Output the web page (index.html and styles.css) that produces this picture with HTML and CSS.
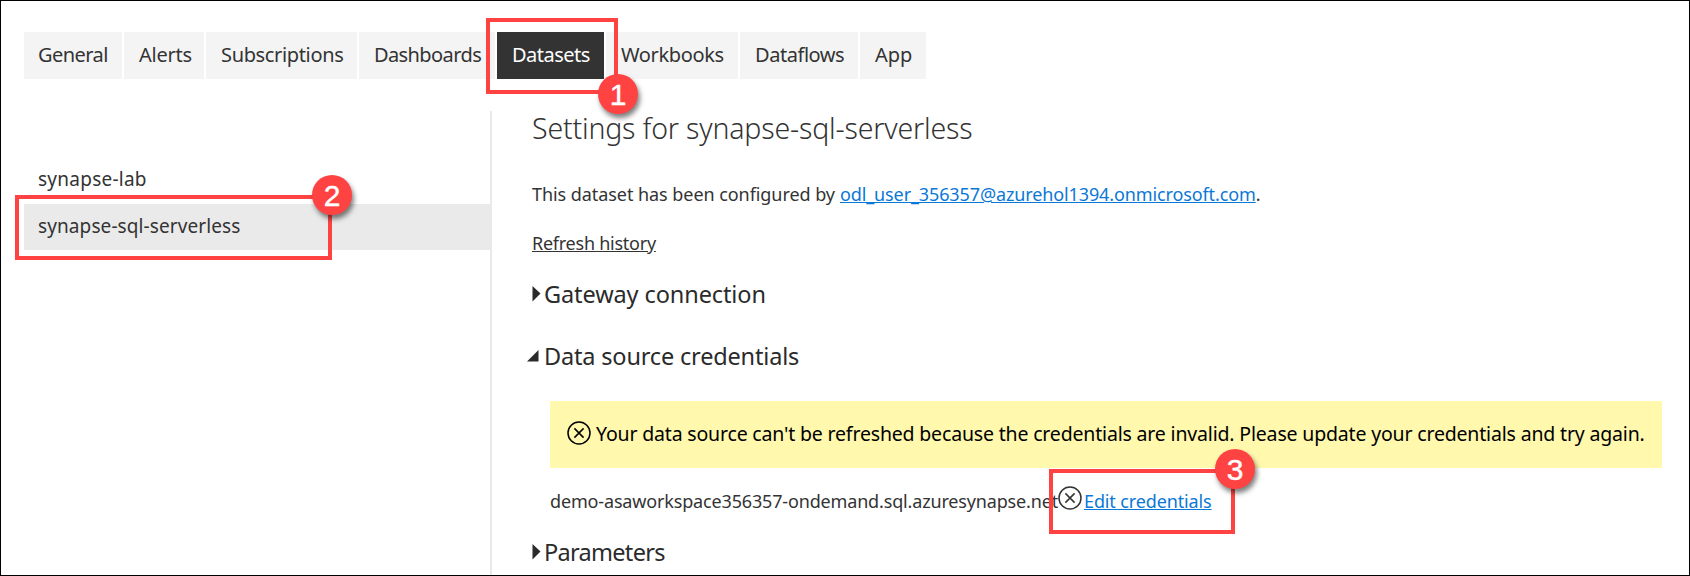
FILE: index.html
```html
<!DOCTYPE html>
<html lang="en">
<head>
<meta charset="utf-8">
<title>Settings</title>
<link rel="stylesheet" href="styles.css">
</head>
<body>
<div class="page">
  <nav class="tabs">
    <a class="tab t-general">General</a>
    <a class="tab t-alerts">Alerts</a>
    <a class="tab t-subscriptions">Subscriptions</a>
    <a class="tab t-dashboards">Dashboards</a>
    <a class="tab t-datasets active">Datasets</a>
    <a class="tab t-workbooks">Workbooks</a>
    <a class="tab t-dataflows">Dataflows</a>
    <a class="tab t-app">App</a>
  </nav>
  <div class="body">
    <aside class="sidebar">
      <div class="item"><span class="item-lab">synapse-lab</span></div>
      <div class="item selected"><span class="item-sql">synapse-sql-serverless</span></div>
    </aside>
    <main class="content">
      <h1 class="title"><span>Settings for synapse-sql-serverless</span></h1>
      <p class="configured"><span class="cfg">This dataset has been configured by</span><a class="link mail">odl_user_356357@azurehol1394.onmicrosoft.com</a><span>.</span></p>
      <p class="history"><a class="hist">Refresh history</a></p>
      <h2 class="section gateway"><svg class="caret" width="9" height="16" viewBox="0 0 9 16"><path d="M0.5 0L8.5 7.5L0.5 15.5Z"/></svg><span>Gateway connection</span></h2>
      <h2 class="section source"><svg class="caret open" width="12" height="12" viewBox="0 0 12 12"><path d="M11.5 0V11.5H0Z"/></svg><span>Data source credentials</span></h2>
      <div class="alert"><svg class="cross" width="24" height="24" viewBox="0 0 24 24"><circle cx="12" cy="12" r="11"/><path d="M7.4 7.4L16.6 16.6M16.6 7.4L7.4 16.6"/></svg><span class="message">Your data source can't be refreshed because the credentials are invalid. Please update your credentials and try again.</span></div>
      <div class="endpoint"><span class="host">demo-asaworkspace356357-ondemand.sql.azuresynapse.net</span><svg class="cross small" width="24" height="24" viewBox="0 0 24 24"><circle cx="12" cy="12" r="11"/><path d="M7.4 7.4L16.6 16.6M16.6 7.4L7.4 16.6"/></svg><a class="link edit">Edit credentials</a></div>
      <h2 class="section params"><svg class="caret" width="9" height="16" viewBox="0 0 9 16"><path d="M0.5 0L8.5 7.5L0.5 15.5Z"/></svg><span>Parameters</span></h2>
    </main>
  </div>
  <div class="mark mark-1"><b class="badge">1</b></div>
  <div class="mark mark-2"><b class="badge">2</b></div>
  <div class="mark mark-3"><b class="badge">3</b></div>
</div>
</body>
</html>
```
FILE: styles.css
```css
* { box-sizing: border-box; }
body { margin: 0; background: #fff; font-family: "Noto Sans", "Open Sans", sans-serif; color: #333; }
.page { position: relative; width: 1690px; height: 576px; border: 1px solid #000; overflow: hidden; display: flex; flex-direction: column; }
.tabs { display: flex; gap: 2px; padding: 31px 0 0 23px; height: 110px; align-items: flex-start; }
.tab { height: 47px; line-height: 45px; padding-left: 15px; background: #f4f4f4; font-size: 20px; white-space: nowrap; }
.tab.active { background: #333; color: #fff; }
.t-general { width: 98px; letter-spacing: -0.55px; padding-left: 14px; }
.t-alerts { width: 80px; letter-spacing: -0.25px; }
.t-subscriptions { width: 151px; letter-spacing: -0.35px; }
.t-dashboards { width: 136px; letter-spacing: -0.6px; }
.t-datasets { width: 107px; letter-spacing: -0.5px; }
.t-workbooks { width: 132px; letter-spacing: -0.36px; }
.t-dataflows { width: 118px; letter-spacing: -0.45px; }
.t-app { width: 66px; }
.body { display: flex; flex: 1; padding-left: 23px; }
.sidebar { width: 468px; border-right: 2px solid #e9e9e9; padding-top: 46px; }
.item { height: 47px; line-height: 44px; padding-left: 14px; font-size: 19px; white-space: nowrap; }
.item-lab { letter-spacing: 0.25px; }
.item-sql { letter-spacing: 0.1px; }
.item.selected { height: 46px; background: #eaeaea; }
.content { flex: 1; padding-left: 40px; display: flex; flex-direction: column; }
.title, .section, .configured, .history { margin: 0; font-weight: 400; white-space: nowrap; }
.title { font-size: 28.5px; font-weight: 300; letter-spacing: -0.18px; line-height: 35px; height: 63px; }
.configured { display: flex; font-size: 18px; line-height: 40px; height: 49px; }
.cfg { width: 308px; letter-spacing: -0.06px; }
.link { color: #0a78d7; text-decoration: underline; }
.mail { letter-spacing: -0.12px; }
.history { font-size: 18px; line-height: 40px; height: 51px; }
.hist { text-decoration: underline; letter-spacing: -0.25px; }
.section { display: flex; align-items: center; font-size: 23.5px; line-height: 40px; height: 40px; color: #2b2b2b; }
.section span { padding-left: 3px; }
.caret { fill: #2b2b2b; }
.gateway { margin-bottom: 22px; letter-spacing: -0.1px; }
.source { margin-left: -5px; margin-bottom: 25px; letter-spacing: -0.17px; }
.source span { padding-left: 5px; }
.alert { display: flex; align-items: center; gap: 5px; width: 1112px; height: 67px; margin-left: 18px; padding: 0 0 3px 17px; background: #fff8ad; color: #000; font-size: 19.5px; white-space: nowrap; }
.message { letter-spacing: -0.172px; }
.cross { fill: none; stroke: #000; stroke-width: 1.5; flex: none; }
.cross.small { stroke: #333; margin-top: -5px; }
.endpoint { display: flex; align-items: center; height: 65px; margin-left: 18px; font-size: 18px; white-space: nowrap; }
.host { width: 508px; letter-spacing: -0.16px; }
.edit { margin-left: 2px; letter-spacing: -0.13px; }
.params { letter-spacing: -0.7px; margin-top: -1px; }
.mark { position: absolute; border: 4px solid #ff4343; }
.mark-1 { left: 485px; top: 17px; width: 132px; height: 76px; }
.mark-2 { left: 14px; top: 194px; width: 317px; height: 65px; }
.mark-3 { left: 1048px; top: 468px; width: 186px; height: 65px; }
.badge { position: absolute; right: -24px; top: -24px; width: 40px; height: 40px; border-radius: 50%; background: #ff4343; color: #fff; font: 400 30px/41px "Liberation Sans", Arial, sans-serif; letter-spacing: 0; text-align: center; -webkit-text-stroke: 0.4px #fff; box-shadow: 2px 4px 5px rgba(0,0,0,.5); }
.mark-1 .badge { top: 52px; }
```
